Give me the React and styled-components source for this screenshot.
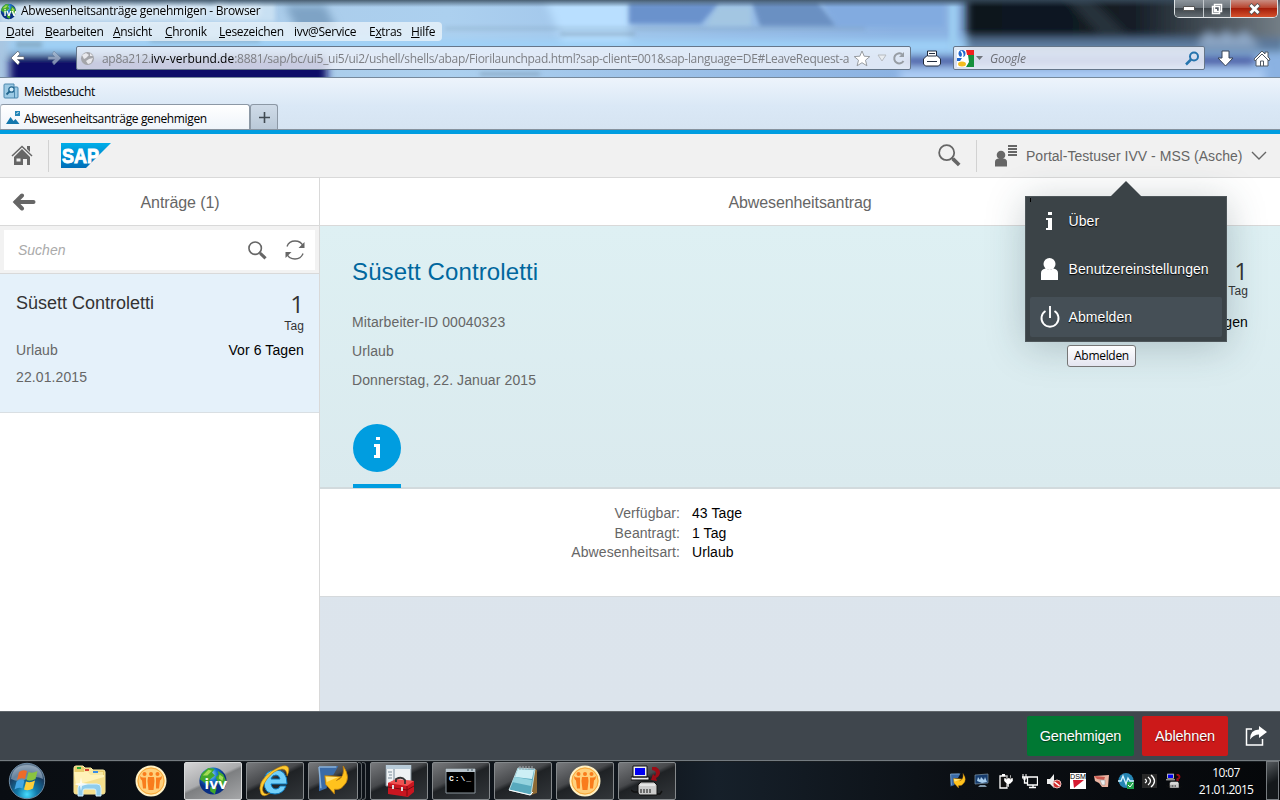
import React from 'react';
import styled, { createGlobalStyle, css } from 'styled-components';

const Global = createGlobalStyle`
  * { box-sizing: border-box; }
  body { margin: 0; overflow: hidden; background: #fff; font-family: "Liberation Sans", Arial, sans-serif; }
  svg { display: block; flex: none; }
`;

const Screen = styled.div`
  width: 1280px; height: 800px; display: flex; flex-direction: column; overflow: hidden;
`;

/* ---------- browser chrome ---------- */
const uiFont = css`font-family: "Open Sans", "Noto Sans", sans-serif;`;

const Chrome = styled.header`
  position: relative; height: 78px; flex: none; display: flex; flex-direction: column;
  border-bottom: 1px solid #76899c; overflow: hidden; ${uiFont}
`;
const Backdrop = styled.svg`position: absolute; inset: 0;`;
const TitleRow = styled.div`
  position: relative; height: 22px; display: flex; align-items: center;
`;
const Title = styled.div`
  font-size: 12px; letter-spacing: -0.27px; line-height: 20px; margin-left: 4px; color: #000; white-space: nowrap;
  text-shadow: 0 0 6px #fff, 0 0 10px #fff;
`;
const WindowButtons = styled.div`
  margin: 0 2px 4px auto; height: 18px; display: flex; border: 1px solid #dfe3e6; border-top: 0;
  border-radius: 0 0 5px 5px; overflow: hidden;
`;
const WinButton = styled.div`
  width: ${p => p.$w}px; display: flex; align-items: center; justify-content: center;
  background: ${p => p.$close
    ? 'linear-gradient(#c98d82 0%, #b9452f 45%, #a51f0b 50%, #d4512c 100%)'
    : 'linear-gradient(#8d959c 0%, #6b737a 45%, #3f464c 50%, #626a70 100%)'};
  & + & { border-left: 1px solid #c5cace; }
`;
const MenuRow = styled.nav`
  position: relative; width: 442px; height: 19px; display: flex; align-items: center; padding-left: 6px;
  background: rgba(240, 246, 251, .72); border-radius: 0 4px 4px 0;
  font-size: 12px; line-height: 17px; color: #000; white-space: nowrap;
`;
const MenuItem = styled.span`width: ${p => p.$w}px; letter-spacing: -0.3px;`;
const NavRow = styled.div`
  position: relative; height: 24px; margin-top: 5px; display: flex; align-items: center;
`;
const Arrows = styled.div`width: 76px; display: flex; gap: 20px; padding-left: 10px;`;
const Field = styled.div`
  width: ${p => p.$w}px; height: 24px; display: flex; align-items: center;
  border: 1px solid #65768a; border-radius: 2px; background: rgba(236, 240, 248, .84);
  font-size: 12px; overflow: hidden; white-space: nowrap;
`;
const Url = styled.div`
  flex: none; margin-left: 4px; color: #7d7f84; letter-spacing: -0.31px;
  b { font-weight: 400; color: #000; letter-spacing: 0.02px; }
`;
const Placeholder = styled.div`flex: 1; margin-left: 7px; font-style: italic; color: #6e7076; letter-spacing: -0.2px;`;
const FieldIcons = styled.div`display: flex; align-items: center; margin-left: auto;`;
const Gap = styled.span`width: ${p => p.$w}px; flex: none; display: flex; justify-content: center;`;

const Strip = styled.div`
  height: 52px; flex: none; display: flex; flex-direction: column; justify-content: space-between;
  background: linear-gradient(#edf4fc, #dae8f6 55%, #d6e4f2); border-bottom: 1px solid #87929e; ${uiFont}
`;
const Bookmark = styled.div`
  height: 27px; display: flex; align-items: center; gap: 5px; padding-left: 3px; font-size: 12px; letter-spacing: -0.35px;
`;
const Tabs = styled.div`display: flex; height: 25px;`;
const Tab = styled.div`
  width: 250px; border: 1px solid #8c98a5; border-left-color: #b6c0ca; border-bottom: 0; border-radius: 3px 3px 0 0;
  background: linear-gradient(#fff, #eff4fa); display: flex; align-items: center; gap: 3px; padding: 2px 0 0 5px;
  font-size: 12px; letter-spacing: -0.36px; white-space: nowrap;
`;
const NewTab = styled.div`
  width: 28px; border: 1px solid #8c98a5; border-bottom: 0; border-radius: 3px 3px 0 0;
  background: linear-gradient(#cfdbe8, #bac9d8); display: flex; align-items: center; justify-content: center;
`;

/* ---------- application shell ---------- */
const Shell = styled.div`
  height: 48px; flex: none; display: flex; align-items: center; border-top: 4px solid #009de0;
  background: #f1f1f1; border-bottom: 1px solid #d9d9d9; color: #666;
`;
const ShellCell = styled.div`
  width: ${p => p.$w}px; height: 32px; display: flex; align-items: center; padding-left: ${p => p.$pl}px;
  ${p => p.$line && 'border-right: 1px solid #d2d2d2;'}
`;
const UserName = styled.div`
  margin-left: 9px; width: 225px; font-size: 14px; letter-spacing: 0.03px; white-space: nowrap;
`;
const Main = styled.main`flex: 1; min-height: 0; display: flex; background: #fff;`;
const Master = styled.section`width: 320px; border-right: 1px solid #d9d9d9; background: #fff;`;
const PaneHeader = styled.div`
  height: 48px; display: flex; align-items: center; border-bottom: 1px solid #d9d9d9;
  background: #fff; color: #666; font-size: 16px; letter-spacing: -0.1px;
`;
const PaneTitle = styled.div`
  flex: 1; text-align: center; line-height: 20px; padding-top: 2px; margin-right: ${p => p.$mr || 0}px;
`;
const SearchBar = styled.div`
  height: 48px; padding: 4px 4px 3px; background: #f2f2f2; border-bottom: 1px solid #d9d9d9;
`;
const SearchBox = styled.div`
  height: 40px; background: #fff; display: flex; align-items: center; padding: 0 10px 0 14px; gap: 18px;
  font-size: 14px; font-style: italic; color: #aaa;
  span { flex: 1; }
`;
const Item = styled.article`
  height: 139px; padding: 17px 15px 0 16px; background: #e5f1fa; border-bottom: 1px solid #d9dfe3;
`;
const Split = styled.div`
  display: flex; justify-content: space-between; align-items: flex-start; height: ${p => p.$h}px;
`;
const Name = styled.div`
  color: ${p => (p.$big ? '#00679e' : '#333')}; font-size: ${p => (p.$big ? 24 : 18)}px; line-height: ${p => (p.$big ? 28 : 24)}px;
  letter-spacing: ${p => (p.$big ? 0.12 : 0)}px;
`;
const Count = styled.div`
  text-align: right; color: #333; font-family: "Open Sans", sans-serif; font-size: 24px; line-height: 26px;
  small { display: block; margin-top: ${p => p.$mt || 0}px; font-family: "Liberation Sans"; font-size: 12px; line-height: 16px; letter-spacing: 0.1px; }
`;
const Line = styled.div`
  font-size: 14px; line-height: ${p => p.$lh || 27}px; color: ${p => (p.$dark ? '#000' : '#666')};
  letter-spacing: 0.1px; white-space: nowrap;
`;
const Detail = styled.section`
  flex: 1; display: flex; flex-direction: column; background: linear-gradient(#dce5ed, #dce4ec);
`;
const ObjectHeader = styled.div`
  height: 263px; padding: 32px 32px 0; background: linear-gradient(#def0f3, #daeaee);
  border-bottom: 2px solid #d2dadd;
`;
const InfoTab = styled.div`
  width: 48px; margin: 29px 0 0 1px; height: 64px; border-bottom: 4px solid #009de0;
`;
const InfoDisc = styled.div`
  width: 48px; height: 48px; padding-bottom: 1px; border-radius: 50%; background: #009de0; display: flex; align-items: center; justify-content: center;
`;
const Facts = styled.dl`
  height: 108px; margin: 0; padding-top: 14px; background: #fff; border-bottom: 1px solid #d5d9dc;
  display: grid; grid-template-columns: 360px 1fr; grid-auto-rows: 19.5px; column-gap: 12px; font-size: 14px; line-height: 20px;
  letter-spacing: 0.08px;
  dt { text-align: right; color: #666; }
  dd { margin: 0; color: #000; }
`;
const Footer = styled.footer`
  height: 49px; flex: none; display: flex; align-items: center; justify-content: flex-end; gap: 8px; padding: 0 12px 0 0;
  background: #3f464d; border-top: 1px solid #60666b;
`;
const Action = styled.div`
  width: ${p => p.$w}px; height: 40px; border-radius: 2px; background: ${p => p.$bg}; color: #fff;
  font-size: 14.5px; line-height: 40px; text-align: center; text-shadow: 0 1px 1px rgba(0,0,0,.5); letter-spacing: -0.15px;
`;

/* ---------- user menu popover ---------- */
const Popover = styled.div`
  position: absolute; left: 1025px; top: 196px; width: 202px; height: 146px; padding: 5px 4px;
  background: #3b4347; border: 1px solid #4e565a; box-shadow: 0 5px 36px rgba(40, 60, 68, .26); color: #fff;
  &::before {
    content: ""; position: absolute; left: 84px; top: -16px; border: 16px solid transparent; border-top: 0;
    border-bottom-color: #3b4347;
  }
  &::after { content: ""; position: absolute; left: 4px; top: 1px; width: 1px; height: 4px; background: #000; }
`;
const MenuEntry = styled.div`
  height: 40px; margin-bottom: 8px; margin-top: ${p => (p.$first ? -1 : 0)}px; display: flex; align-items: center; border-radius: 2px;
  background: ${p => (p.$active ? '#454f56' : 'transparent')};
  font-size: 14px; letter-spacing: 0.08px; text-shadow: 0 1px 1px #000; white-space: nowrap;
  svg { margin: 0 8.5px 0 10px; }
`;
const Tooltip = styled.div`
  position: absolute; left: 1067px; top: 345px; width: 69px; height: 22px; border: 1px solid #767676; border-radius: 3px;
  background: linear-gradient(#fff, #e4e5f0); ${uiFont} font-size: 12px; line-height: 20px; letter-spacing: -0.3px;
  text-align: center; color: #000;
`;

/* ---------- taskbar ---------- */
const Taskbar = styled.div`
  height: 40px; flex: none; display: flex; align-items: center; padding-left: 8px; border-top: 1px solid #747b80;
  background: linear-gradient(90deg, #090d12, #10161d 50%, #16202a 56%, #0b0f14 75%, #05070a); box-shadow: inset 0 1px #191e22;
`;
const Pinned = styled.div`width: ${p => p.$w}px; display: flex; justify-content: center;`;
const TaskButton = styled.div`
  width: ${p => p.$w || 58}px; height: 38px; margin-right: ${p => p.$mr ?? 4}px; display: flex; align-items: center; justify-content: center;
  border: 1px solid ${p => (p.$active ? '#d8dadb' : '#85898c')}; border-radius: 2px;
  background: ${p => (p.$active
    ? 'linear-gradient(155deg, #d5d5d6 0%, #aaabad 45%, #7d7f81 50%, #a5a6a8 100%)'
    : 'linear-gradient(155deg, #77797c 0%, #47494c 40%, #1f2225 48%, #32363a 100%)')};
`;
const Stack = styled.div`width: 4px; height: 38px; border: 1px solid #5d6266; border-left: 0; border-radius: 0 3px 3px 0;`;
const Tray = styled.div`display: flex; margin-left: auto; gap: 8px;`;
const Clock = styled.div`
  width: 84px; padding-left: 4px; text-align: center; color: #fff; ${uiFont} font-size: 12px; line-height: 17px; letter-spacing: -0.65px;
`;
const ShowDesktop = styled.div`
  width: 13px; height: 39px; margin-right: 1px; border: 1px solid #777c80; background: linear-gradient(150deg, #555a5e, #14181b 55%);
`;

/* ---------- icons ---------- */
const Svg = ({ w, h = w, vb, children, ...rest }) => (
  <svg width={w} height={h} viewBox={vb || `0 0 ${w} ${h}`} {...rest}>{children}</svg>
);

const Globe = ({ size }) => (
  <Svg w={size} vb="0 0 32 32">
    <defs><radialGradient id="globe" cx=".4" cy=".25"><stop offset="0" stopColor="#b8e4ff" /><stop offset=".5" stopColor="#1878d0" /><stop offset="1" stopColor="#092f83" /></radialGradient></defs>
    <circle cx="16" cy="16" r="14.5" fill="url(#globe)" />
    <path d="M4 8l7-6 7 1-3 4 3 3-5 4-2 7-5-4-4-3zM21 5l6 4 3 7-3 9-5-6-3-7 3-3zM13 22l7 1-2 7-5-3z" fill="#43a82c" />
    <path d="M5 10l6-6 4 1-5 5zM23 9l4 3-1 4-4-3z" fill="#a4db54" />
    <text x="19" y="25" fontFamily="Open Sans" fontWeight="700" fontSize="16" fill="#fff" textAnchor="middle" textLength="24">ivv</text>
  </Svg>
);

const Lens = ({ w, sw = 1.7 }) => (
  <Svg w={w} vb="0 0 22 22" fill="none" stroke="#666">
    <circle cx="8.3" cy="8.3" r="7.2" strokeWidth={sw} /><path d="M14.3 14.3l6 5.8" strokeWidth="3.6" />
    <path d="M13 13l2 2" strokeWidth="2" />
  </Svg>
);

const InfoGlyph = () => (
  <Svg w={8} h={21}><path fill="#fff" d="M3 0h4v3H3zM1 7h6v14H1v-3h2v-8H1z" /></Svg>
);

const Person = () => (
  <Svg w={20} h={24}>
    <circle cx="9.5" cy="7" r="6" fill="#fff" /><path d="M1 23v-7q0-4 5-4.5 4 2.5 7 0 5 .5 5 4.5v7z" fill="#fff" />
  </Svg>
);

const People = ({ w }) => (
  <Svg w={w} vb="0 0 32 32">
    <circle cx="16" cy="16" r="14.5" fill="#ffc154" stroke="#fff0c4" strokeWidth="2" />
    <circle cx="16" cy="16" r="13" fill="#ffd07c" stroke="#f9a93c" />
    <g fill="#f97c1c"><circle cx="9.5" cy="9" r="2" /><circle cx="16" cy="9" r="2" /><circle cx="22.5" cy="9" r="2" />
      <path d="M5 11q2 2 4 1.500h2v11H8l-1-8q-2-1-2-4.500zM13 12h6l.5 4-1 9h-5l-1-9zM27 11q-2 2-4 1.500h-2v11h3l1-8q2-1 2-4.500z" /></g>
  </Svg>
);

const YellowArrow = ({ w }) => (
  <Svg w={w} vb="0 0 32 32">
    <path d="M1 2l20-1-5 9-6 1-1 13-8 3z" fill="#3a6ba8" /><path d="M1 2h18M3 24L1 2" stroke="#8ab1d7" strokeWidth="1.5" />
    <path d="M26 1q9 13 0 21-3 4-9 3v5L8 20l-1-9 17 1-5 4q9-3 7-15z" fill="#ffc21d" stroke="#bd7c0e" strokeWidth=".8" />
    <path d="M8 12l13 .5-12 5z" fill="#ffe37c" />
  </Svg>
);

const NetPrinter = ({ w }) => (
  <Svg w={w} vb="0 0 32 32">
    <path d="M2 1h14v11H2zM0 12h18v3H0z" fill="#eee" stroke="#111" /><path d="M4 3h10v7H4z" fill="#0000f0" />
    <path d="M21 2h4q4 2 4 6-1 4-4 5l1 3-6-1 2-6 2 2q3-5-3-6z" fill="#9a0c16" />
    <path d="M7 20l3-3h13l3 3v10H9q-2 0-2-3z" fill="#ccc" stroke="#111" /><path d="M9 20h15" stroke="#fff" />
    <path d="M10 24v4M13 24v4M16 24v4M19 24v4" stroke="#111" />
    <path d="M0 25l3 2h4M26 29h3l2-3" stroke="#111" strokeWidth="1.5" fill="none" />
  </Svg>
);

const Explorer = () => (
  <Svg w={34} h={32}>
    <path d="M2 3q0-2 2-2h7l2 2h6l2 2h10q2 0 2 2v20q0 2-2 2H4q-2 0-2-2z" fill="#e9cd6e" stroke="#fff0a8" />
    <path d="M12 4h8l2 3h9v5H12z" fill="#f8e9a2" /><path d="M5 2h4v2H5z" fill="#2aaa38" /><path d="M13 4h4v2h-4z" fill="#d84333" /><path d="M21 6h5v2h-5z" fill="#3b8ee5" />
    <path d="M2 7h14l3 3h13v18H2z" fill="#f5df8d" /><path d="M2 7h14l3 3h13v2L4 20z" fill="#fff2b8" />
    <path d="M6 31v-8q0-4 4-4h15q4 0 4 4v8h-5v-5q0-2-2-2h-9q-2 0-2 2v5z" fill="#8fcdec" stroke="#d5f1ff" />
    <path d="M9 12l1 6 6 1-6 2-1 5-1-5-6-2 6-1z" fill="#fff" opacity=".8" />
  </Svg>
);

const StartOrb = () => (
  <Svg w={38} vb="0 0 38 38">
    <defs><radialGradient id="orb" cx=".5" cy=".88" r=".8"><stop stopColor="#45dcff" /><stop offset=".35" stopColor="#127aaa" /><stop offset=".75" stopColor="#183c60" /><stop offset="1" stopColor="#60788f" /></radialGradient></defs>
    <circle cx="19" cy="19" r="17.7" fill="url(#orb)" stroke="#6d8ba4" /><path d="M3 17Q5 3 19 3t16 14q-8-4-16 0T3 17z" fill="#c7d9e8" opacity=".45" />
    <path d="M11 10q4-3 8-1l-2 8q-4-2-8 1z" fill="#ee6b29" /><path d="M20.5 10q4 2 9-1l-2 8q-5 3-9 1z" fill="#8ac33f" />
    <path d="M8.500 19.500q4-3 8-1l-2 8q-4-2-8 1z" fill="#43a6e4" /><path d="M18 19.500q4 2 9-1l-2 8q-5 3-9 1z" fill="#ffcf3a" />
  </Svg>
);

const InternetE = () => (
  <Svg w={32} vb="0 0 32 32">
    <path d="M27 21q-3 8-11 8-11 0-11-12T17 5q11 0 11 14H12q1 5 5 5 3 0 4-3zM12 14h9q-1-4-4-4-4 0-5 4z" fill="#72d0fa" stroke="#0b78bd" />
    <path d="M2 29Q-3 17 13 6 26-2 29 2q2 3-1 9 0-7-5-7-8 1-15 10-7 10-3 14 2 2 6 0-6 5-9 1z" fill="#ffcb32" stroke="#b87a08" strokeWidth=".6" />
  </Svg>
);

const Toolbox = () => (
  <Svg w={32}>
    <path d="M3 0h25v21H3z" fill="#eef2f4" stroke="#7e8b94" /><path d="M3 0h25v4H3z" fill="#b8cbd8" /><path d="M5 7h4M6 10h3M5 13h4M11 4v13" stroke="#788b99" />
    <path d="M5 18l8-3 18 1v11l-6 5-20-3z" fill="#c91620" /><path d="M5 18l19 3 7-5-18-2z" fill="#ef5150" /><path d="M5 22l19 3 7-4M24 21v10" stroke="#790a10" fill="none" />
    <path d="M13 17v-3q6-3 9 1v4" fill="none" stroke="#333" strokeWidth="1.8" /><path d="M9 20h2v4H9zM18 22h2v4h-2z" fill="#ddd" />
  </Svg>
);

const Console = () => (
  <Svg w={32} h={28}>
    <path d="M1 2h29v24H1z" fill="#000" stroke="#8b969d" /><path d="M1 2h29v3H1z" fill="#b9c4cb" /><path d="M22 3h2m2 0h2" stroke="#40545f" />
    <text x="4" y="14" fill="#fff" fontFamily="Liberation Mono" fontSize="8" fontWeight="700" textLength="22">C:\_</text>
  </Svg>
);

const Notepad = () => (
  <Svg w={32}>
    <path d="M26 4l4 1v23l-6 2z" fill="#8d6a35" /><path d="M11 3l17 1-4 26-22-5z" fill="#58a9bd" stroke="#d6f3f6" strokeWidth=".8" />
    <path d="M11 4l16 1-2 9L8 12z" fill="#cdeff5" /><path d="M8 12l17 3-1 6L5 17z" fill="#94d3df" />
    <path d="M13 1v4m3-4v4m3-4v4m3-4v4m3-4v4" stroke="#a4abb0" />
    <path d="M2 25l21 5 3-3" fill="none" stroke="#fff" />
  </Svg>
);

const TrayIcons = () => (
  <>
    <YellowArrow w={16} />
    <Svg w={16}><path d="M1 2l13-1v9l-13 1z" fill="#163c6e" stroke="#8096a8" strokeWidth=".7" /><path d="M3 8l1-4 2 3 1-3 3 3 1-3 2 5-5 1z" fill="#a8cdec" /><path d="M4 14h9l-2-2H6z" fill="#8198ab" /></Svg>
    <Svg w={16}><path d="M2 3h7v12H2z" fill="#111" stroke="#fff" strokeWidth="1.300" /><path d="M4 1h3v2H4z" fill="#fff" /><path d="M6 5h9v3l-3 3h-1v3H9v-3L6 8zM8 2h1v4H8zM12 2h1v4h-1z" fill="#fff" stroke="#111" strokeWidth=".4" /></Svg>
    <Svg w={16}><path d="M5.500 4h10v8h-10zM7 14.500h7M11 12v3M0 4h5M2.500 4v6h3" stroke="#fff" strokeWidth="1.3" fill="none" /><path d="M1 1v5h3V1" stroke="#fff" fill="none" /></Svg>
    <Svg w={16}><path d="M1 6h3l4-5v14l-4-4H1z" fill="#eee" /><circle cx="11" cy="11" r="4" fill="#d12d2d" stroke="#f0bcbc" /><path d="M8.500 9l5 4" stroke="#fff" strokeWidth="1.6" /></Svg>
    <Svg w={16}><path d="M0 0h16v16H0z" fill="#fff" /><text x="8" y="6" fontSize="7" textAnchor="middle" textLength="16" lengthAdjust="spacingAndGlyphs" fontFamily="Liberation Sans">DSM</text><path d="M3 7h11L4 15z" fill="#d61b32" /></Svg>
    <Svg w={16}><path d="M0 3l15-1-1 12H8l-3-4-4-2z" fill="#ebb4a2" /><path d="M0 3l11 1-1 3-7-1z" fill="#c9584e" /><path d="M6 7h5v5H8z" fill="#eee" stroke="#999" strokeWidth=".6" /></Svg>
    <Svg w={16}><circle cx="8" cy="7.5" r="7.5" fill="#2686b5" /><path d="M0 8h3l2-5 3 8 2-6 2 3h4" stroke="#d5f4ff" strokeWidth="1.3" fill="none" /><path d="M9 9h7v7H9z" fill="#20a14b" /><path d="M10 12l2 2 3-4" stroke="#fff" fill="none" /></Svg>
    <Svg w={16}><path d="M0 1h15v14H0z" fill="#292929" /><path d="M3 6q3 2 0 4M6 4q5 4 0 8M9 2q7 6 0 12" stroke="#fff" fill="none" strokeWidth="1.3" /></Svg>
    <NetPrinter w={16} />
  </>
);

const ChromeBackdrop = () => (
  <Backdrop width="1280" height="78" viewBox="0 0 1280 78" preserveAspectRatio="none">
    <defs>
      <filter id="soft" x="-10%" y="-20%" width="120%" height="140%"><feGaussianBlur stdDeviation="4" /></filter>
      <filter id="fine"><feGaussianBlur stdDeviation="2" /></filter>
      <linearGradient id="sky"><stop stopColor="#a8c6e2" /><stop offset=".35" stopColor="#acd0ef" /><stop offset=".7" stopColor="#8bb2e2" /></linearGradient>
      <linearGradient id="dark"><stop stopColor="#0c151e" /><stop offset=".5" stopColor="#141c25" /><stop offset=".68" stopColor="#39434c" /><stop offset="1" stopColor="#7d8890" /></linearGradient>
      <linearGradient id="topline" x2="0" y2="1"><stop stopColor="#384b5c" stopOpacity=".85" /><stop offset="1" stopColor="#384b5c" stopOpacity="0" /></linearGradient>
    </defs>
    <path d="M0 0h1280v78H0z" fill="url(#sky)" />
    <g filter="url(#soft)">
      <path d="M285 5h40l12 25h-40z" fill="#7ea3c5" /><path d="M545 0h85v48h-65z" fill="#b9dfff" />
      <path d="M10 40h1280v13H10z" fill="#9ed1f8" /><path d="M966-10h330v50H966z" fill="url(#dark)" />
      <path d="M1060-8l40 43h28L1085-8z" fill="#27313a" />
      <path d="M966 38h320v14H966z" fill="#5c799c" />
      <path d="M10 54h317v50H10z" fill="#080d67" /><path d="M905 57h350v8H905z" fill="#3a4798" />
      <path d="M900 69h365v20H900z" fill="#acccf4" /><path d="M1200 40l8-8 10 6 8-7 9 7 10-7 15 16h-60z" fill="#8fa9c8" />
    </g>
    <g filter="url(#fine)">
      <path d="M629 3h90l-18 21h-72z" fill="#6a92cc" /><path d="M718 6h33v20h-45z" fill="#a3c6e2" /><path d="M752 2h65l19 24h-76z" fill="#6b90c2" /><path d="M822 2h122v25H837z" fill="#82abe0" />
      <path d="M560 33h75v2h-75zM445 28h420v1H445zM480 73h60v2h-60z" fill="#7896ae" />
      <path d="M949 4h8v45h-8z" fill="#9bccf0" /><path d="M0 3h275v19H0z" fill="#dcecf8" opacity=".6" />
      <path d="M16 41h26v7H16zM150 38h110v4H150z" fill="#7fa2bb" opacity=".7" />
    </g>
    <path d="M0 0h1280v7H0z" fill="url(#topline)" />
  </Backdrop>
);

export default function App() {
  return (
    <Screen>
      <Global />
      <Chrome>
        <ChromeBackdrop />
        <TitleRow>
          <Globe size={17} />
          <Title>Abwesenheitsanträge genehmigen - Browser</Title>
          <WindowButtons>
            <WinButton $w={28}><Svg w={12} h={5}><path d="M.5.5h11v4H.5z" fill="#fff" stroke="#555" /></Svg></WinButton>
            <WinButton $w={27}><Svg w={12}><path d="M3.500 1.500h7v7h-7zM1.500 3.500h7v7h-7z" fill="#596068" stroke="#fff" strokeWidth="1.5" /><path d="M4 6h2v2H4z" fill="#fff" /></Svg></WinButton>
            <WinButton $w={47} $close><Svg w={13} h={12}><path d="M2 1.500l9 9M11 1.500l-9 9" stroke="#555" strokeWidth="4.5" /><path d="M2.500 2l8 8M10.500 2l-8 8" stroke="#fff" strokeWidth="2.8" /></Svg></WinButton>
          </WindowButtons>
        </TitleRow>
        <MenuRow>
          <MenuItem $w={39}><u>D</u>atei</MenuItem><MenuItem $w={68}><u>B</u>earbeiten</MenuItem>
          <MenuItem $w={52}><u>A</u>nsicht</MenuItem><MenuItem $w={54}><u>C</u>hronik</MenuItem>
          <MenuItem $w={75}><u>L</u>esezeichen</MenuItem><MenuItem $w={75}>ivv@Service</MenuItem>
          <MenuItem $w={42}>E<u>x</u>tras</MenuItem><MenuItem $w={30}><u>H</u>ilfe</MenuItem>
        </MenuRow>
        <NavRow>
          <Arrows>
            <Svg w={16}><path d="M8 1L1 8l7 7 2-3-2.500-2.500H14v-3H7.500L10 4z" fill="#fff" stroke="#56606b" strokeWidth=".7" /></Svg>
            <Svg w={16}><path d="M8 1l7 7-7 7-2-3 2.500-2.500H2v-3h6.500L6 4z" fill="#aebdd0" stroke="#697f9b" strokeWidth=".7" opacity=".7" /></Svg>
          </Arrows>
          <Field $w={835}>
            <Gap $w={21}><Svg w={15}><circle cx="7.5" cy="7.5" r="6.500" fill="#a4a5a9" /><path d="M2 4l4-2 3 2-3 3-2 1zM9 8l4-1-2 5-3 1-2-3zM10 2l3 3h-3z" fill="#e9e9ed" /></Svg></Gap>
            <Url>ap8a212.<b>ivv-verbund.de</b>:8881/sap/bc/ui5_ui5/ui2/ushell/shells/abap/Fiorilaunchpad.html?sap-client=001&amp;sap-language=DE#LeaveRequest-a</Url>
            <FieldIcons>
              <Svg w={18} h={17}><path d="M9 1l2.2 5.200 5.600.4-4.300 3.600 1.400 5.600L9 12.700l-4.900 3.100 1.400-5.600L1.200 6.600l5.600-.4z" fill="#fff" stroke="#979ba0" /></Svg>
              <Gap $w={21}><Svg w={10} h={8}><path d="M1 1h8L5 7z" fill="#e9edf1" stroke="#b6babf" /></Svg></Gap>
              <Svg w={14}><path d="M10 3.200A5 5 0 1 0 11.500 10" fill="none" stroke="#979da4" strokeWidth="2" /><path d="M7 6h5V1z" fill="#979da4" /></Svg>
              <Gap $w={4} />
            </FieldIcons>
          </Field>
          <Gap $w={42}><Svg w={18} h={17}><path d="M4.500 1h9v5h1l3 3v5l-2 2h-13l-2-2V9l3-3h1z" fill="#fff" stroke="#222c3e" /><path d="M5 6h8M6 3.500h6M4 11.500h10" fill="none" stroke="#222c3e" /></Svg></Gap>
          <Field $w={252}>
            <Gap $w={22}><Svg w={17}><path d="M0 0h17v17H0z" fill="#fff" /><path d="M9 0h8v5h-7z" fill="#f22020" /><path d="M11 5h6v12H9l3-5z" fill="#15903d" /><circle cx="5" cy="3.500" r="3.500" fill="#2167ce" /><path d="M0 8h5l-2 3H0z" fill="#2167ce" /><ellipse cx="5" cy="14" rx="4" ry="2.500" fill="#f5bd21" /><path d="M4 1q3 3 1 6l5 5" stroke="#fff" strokeWidth="1.6" fill="none" /></Svg></Gap>
            <Svg w={7} h={4}><path d="M0 0h7L3.500 4z" fill="#70757c" /></Svg>
            <Placeholder>Google</Placeholder>
            <Svg w={15}><circle cx="9" cy="5.500" r="4" fill="none" stroke="#2674ad" strokeWidth="2" /><path d="M6 8.500l-5 5" stroke="#2674ad" strokeWidth="2.500" /></Svg><Gap $w={4} />
          </Field>
          <Gap $w={41}><Svg w={17}><path d="M5 1h7v7h4l-7.500 8L1 8h4z" fill="#fff" stroke="#384659" /></Svg></Gap>
          <Gap $w={32}><Svg w={18} h={17}><path d="M1 9l8-8 3 3V2h3v5l2 2-1 2-1-1v6H3v-6l-1 1z" fill="#fff" stroke="#4f5964" /><path d="M7.500 16v-5h3v5M3 10l6-6 6 6" fill="none" stroke="#4f5964" /></Svg></Gap>
        </NavRow>
      </Chrome>
      <Strip>
        <Bookmark>
          <Svg w={16}><path d="M1 2q0-1 1-1h9v3h3q1 0 1 1v9q0 1-1 1H2q-1 0-1-1z" fill="#9ccae5" stroke="#4c88ae" /><circle cx="8.500" cy="6.500" r="2.700" fill="#d7effb" stroke="#22658e" strokeWidth="1.3" /><path d="M6.500 8.500l-3 3" stroke="#22658e" strokeWidth="1.800" /><path d="M11.500 4v11" stroke="#4c88ae" /></Svg>
          Meistbesucht
        </Bookmark>
        <Tabs>
          <Tab><Svg w={15}><path d="M0 13l4.500-7 3 4 2-2 4 5z" fill="#1377ad" /><path d="M9 0h5v5H9z" fill="#2586b8" /><path d="M10.500 3l2-2" stroke="#fff" /></Svg>Abwesenheitsanträge genehmigen</Tab>
          <NewTab><Svg w={11}><path d="M5.500 0v11M0 5.500h11" stroke="#414a52" strokeWidth="1.600" /></Svg></NewTab>
        </Tabs>
      </Strip>
      <Shell>
        <ShellCell $w={49} $pl={11} $line>
          <Svg w={22} h={21}><path d="M1 11L11 1.500 21 11" fill="none" stroke="#666" strokeWidth="1.500" /><path d="M16 1h3v6l-3-3zM3 12l8-8 8 8v8h-3v-6h-4v6H3z" fill="#666" /><path d="M5.500 13.500h4v3h-4z" fill="#f1f1f1" /></Svg>
        </ShellCell>
        <ShellCell $w={877} $pl={12}>
          <Svg w={50} h={25}>
            <defs><linearGradient id="sap" x2="0" y2="1"><stop stopColor="#00aee9" /><stop offset="1" stopColor="#006eb8" /></linearGradient></defs>
            <path d="M0 0h50L25 25H0z" fill="url(#sap)" /><text x="1" y="20" fontFamily="Liberation Sans" fontWeight="700" fontSize="20" fill="#fff" stroke="#fff" strokeWidth=".9" textLength="37" lengthAdjust="spacingAndGlyphs">SAP</text>
          </Svg>
        </ShellCell>
        <ShellCell $w={51} $pl={12} $line><Lens w={23} /></ShellCell>
        <ShellCell $w={303} $pl={17}>
          <Svg w={23} h={23}><circle cx="7" cy="11" r="4.300" fill="#666" /><path d="M1 22.500V18q0-3.500 4-3.500 2 1 4 0 4 0 4 3.500v4.500zM14 1h9v2h-9zM14 4h9v2h-9zM14 7h9v2h-9zM14 10h9v2h-9z" fill="#666" /></Svg>
          <UserName>Portal-Testuser IVV - MSS (Asche)</UserName>
          <Svg w={16} h={10}><path d="M1 1l7 7 7-7" fill="none" stroke="#666" strokeWidth="1.400" /></Svg>
        </ShellCell>
      </Shell>
      <Main>
        <Master>
          <PaneHeader>
            <Gap $w={48}><Svg w={24} h={18}><path d="M10 2.500L3.500 9l6.500 6.500" fill="none" stroke="#666" strokeWidth="4" strokeLinecap="round" /><path d="M4 9h17.500" stroke="#666" strokeWidth="4" strokeLinecap="round" /></Svg></Gap>
            <PaneTitle $mr={7}>Anträge (1)</PaneTitle>
          </PaneHeader>
          <SearchBar><SearchBox><span>Suchen</span><Lens w={19} sw={1.9} />
            <Svg w={20} h={20}><path d="M2 6.500Q4 1 10 1t8 5M18 13.500Q16 19 10 19t-8-5" fill="none" stroke="#666" strokeWidth="1.300" /><path d="M19.500 2v6h-6zM.5 18v-6h6z" fill="#666" /></Svg>
          </SearchBox></SearchBar>
          <Item>
            <Split $h={46}><Name>Süsett Controletti</Name><Count $mt={1}>1<small>Tag</small></Count></Split>
            <Split $h={27}><Line>Urlaub</Line><Line $dark>Vor 6 Tagen</Line></Split>
            <Line>22.01.2015</Line>
          </Item>
        </Master>
        <Detail>
          <PaneHeader><PaneTitle>Abwesenheitsantrag</PaneTitle></PaneHeader>
          <ObjectHeader>
            <Split $h={50}><Name $big>Süsett Controletti</Name><Count $mt={-1}>1<small>Tag</small></Count></Split>
            <Split $h={29}><Line $lh={29}>Mitarbeiter-ID 00040323</Line><Line $lh={29} $dark>Vor 6 Tagen</Line></Split>
            <Line $lh={29}>Urlaub</Line>
            <Line $lh={29}>Donnerstag, 22. Januar 2015</Line>
            <InfoTab><InfoDisc><InfoGlyph /></InfoDisc></InfoTab>
          </ObjectHeader>
          <Facts><dt>Verfügbar:</dt><dd>43 Tage</dd><dt>Beantragt:</dt><dd>1 Tag</dd><dt>Abwesenheitsart:</dt><dd>Urlaub</dd></Facts>
        </Detail>
      </Main>
      <Footer>
        <Action $w={107} $bg="#007833">Genehmigen</Action>
        <Action $w={86} $bg="#cc1919">Ablehnen</Action>
        <Gap $w={0} />
        <Svg w={24} h={22}><path d="M8 4H2.500v16h16v-6" fill="none" stroke="#fff" strokeWidth="1.500" /><path d="M15 1l8 6-8 6V9.500q-5 0-9 5 0-10 9-10z" fill="#fff" /></Svg>
      </Footer>
      <Taskbar>
        <Pinned $w={38}><StartOrb /></Pinned><Pinned $w={86}><Explorer /></Pinned><Pinned $w={38}><People w={32} /></Pinned><Gap $w={14} />
        <TaskButton $active><Globe size={30} /></TaskButton>
        <TaskButton><InternetE /></TaskButton>
        <TaskButton $w={50} $mr={0}><YellowArrow w={31} /></TaskButton><Stack /><Stack /><Gap $w={4} />
        <TaskButton><Toolbox /></TaskButton><TaskButton><Console /></TaskButton><TaskButton><Notepad /></TaskButton>
        <TaskButton><People w={32} /></TaskButton><TaskButton><NetPrinter w={32} /></TaskButton>
        <Tray><TrayIcons /></Tray>
        <Clock>10:07<br />21.01.2015</Clock><ShowDesktop />
      </Taskbar>
      <Popover>
        <MenuEntry $first><Svg w={20} h={24}><path fill="#fff" d="M8 3h4v3H8zM6 9h6v12H6v-2h2v-8H6z" /></Svg>Über</MenuEntry>
        <MenuEntry><Person />Benutzereinstellungen</MenuEntry>
        <MenuEntry $active><Svg w={20} h={24}><path d="M5.500 6a8.500 8.500 0 1 0 9 0M10 1v12" fill="none" stroke="#fff" strokeWidth="1.900" /></Svg>Abmelden</MenuEntry>
      </Popover>
      <Tooltip>Abmelden</Tooltip>
    </Screen>
  );
}
